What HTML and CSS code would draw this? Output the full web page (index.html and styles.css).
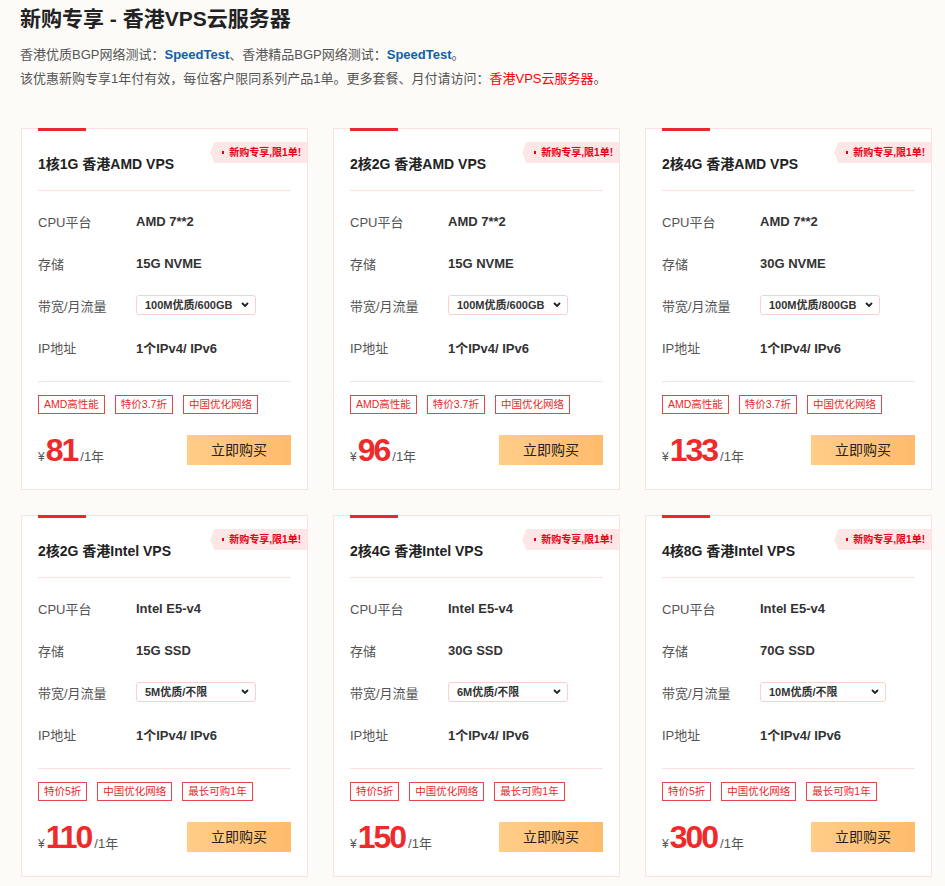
FILE: index.html
```html
<!DOCTYPE html>
<html lang="zh-CN">
<head>
  <meta charset="UTF-8">
  <meta name="viewport" content="width=device-width, initial-scale=1.0">
  <title>新购专享 - 香港VPS云服务器</title>
  <link rel="stylesheet" href="styles.css">
</head>
<body>
  <!-- Intro -->
  <section class="promo">
    <h1>新购专享 - 香港VPS云服务器</h1>
    <div class="intro">
      <p>香港优质BGP网络测试：<a class="link-blue" href="#">SpeedTest</a>、香港精品BGP网络测试：<a class="link-blue" href="#">SpeedTest</a>。</p>
      <p>该优惠新购专享1年付有效，每位客户限同系列产品1单。更多套餐、月付请访问：<a class="link-red" href="#">香港VPS云服务器</a>。</p>
    </div>

    <!-- Plans -->
    <div class="plans">

      <div class="plan">
        <span class="plan-bar"></span>
        <span class="plan-badge">新购专享,限1单!</span>
        <h3 class="plan-title">1核1G 香港AMD VPS</h3>
        <ul class="specs">
          <li><span class="spec-label">CPU平台</span><span class="spec-value">AMD 7**2</span></li>
          <li><span class="spec-label">存储</span><span class="spec-value">15G NVME</span></li>
          <li><span class="spec-label">带宽/月流量</span>
            <span class="select-wrap"><select><option>100M优质/600GB</option></select>
              <svg class="chevron" viewBox="0 0 8 5"><path d="M1 1l3 3 3-3"/></svg></span></li>
          <li><span class="spec-label">IP地址</span><span class="spec-value">1个IPv4/ IPv6</span></li>
        </ul>
        <div class="tags"><span>AMD高性能</span><span>特价3.7折</span><span>中国优化网络</span></div>
        <div class="buy-row">
          <div class="price"><span class="yen">¥</span><span class="amount">81</span><span class="unit">/1年</span></div>
          <a class="buy-btn" href="#">立即购买</a>
        </div>
      </div>

      <div class="plan">
        <span class="plan-bar"></span>
        <span class="plan-badge">新购专享,限1单!</span>
        <h3 class="plan-title">2核2G 香港AMD VPS</h3>
        <ul class="specs">
          <li><span class="spec-label">CPU平台</span><span class="spec-value">AMD 7**2</span></li>
          <li><span class="spec-label">存储</span><span class="spec-value">15G NVME</span></li>
          <li><span class="spec-label">带宽/月流量</span>
            <span class="select-wrap"><select><option>100M优质/600GB</option></select>
              <svg class="chevron" viewBox="0 0 8 5"><path d="M1 1l3 3 3-3"/></svg></span></li>
          <li><span class="spec-label">IP地址</span><span class="spec-value">1个IPv4/ IPv6</span></li>
        </ul>
        <div class="tags"><span>AMD高性能</span><span>特价3.7折</span><span>中国优化网络</span></div>
        <div class="buy-row">
          <div class="price"><span class="yen">¥</span><span class="amount">96</span><span class="unit">/1年</span></div>
          <a class="buy-btn" href="#">立即购买</a>
        </div>
      </div>

      <div class="plan">
        <span class="plan-bar"></span>
        <span class="plan-badge">新购专享,限1单!</span>
        <h3 class="plan-title">2核4G 香港AMD VPS</h3>
        <ul class="specs">
          <li><span class="spec-label">CPU平台</span><span class="spec-value">AMD 7**2</span></li>
          <li><span class="spec-label">存储</span><span class="spec-value">30G NVME</span></li>
          <li><span class="spec-label">带宽/月流量</span>
            <span class="select-wrap"><select><option>100M优质/800GB</option></select>
              <svg class="chevron" viewBox="0 0 8 5"><path d="M1 1l3 3 3-3"/></svg></span></li>
          <li><span class="spec-label">IP地址</span><span class="spec-value">1个IPv4/ IPv6</span></li>
        </ul>
        <div class="tags"><span>AMD高性能</span><span>特价3.7折</span><span>中国优化网络</span></div>
        <div class="buy-row">
          <div class="price"><span class="yen">¥</span><span class="amount">133</span><span class="unit">/1年</span></div>
          <a class="buy-btn" href="#">立即购买</a>
        </div>
      </div>

      <div class="plan">
        <span class="plan-bar"></span>
        <span class="plan-badge">新购专享,限1单!</span>
        <h3 class="plan-title">2核2G 香港Intel VPS</h3>
        <ul class="specs">
          <li><span class="spec-label">CPU平台</span><span class="spec-value">Intel E5-v4</span></li>
          <li><span class="spec-label">存储</span><span class="spec-value">15G SSD</span></li>
          <li><span class="spec-label">带宽/月流量</span>
            <span class="select-wrap"><select><option>5M优质/不限</option></select>
              <svg class="chevron" viewBox="0 0 8 5"><path d="M1 1l3 3 3-3"/></svg></span></li>
          <li><span class="spec-label">IP地址</span><span class="spec-value">1个IPv4/ IPv6</span></li>
        </ul>
        <div class="tags"><span>特价5折</span><span>中国优化网络</span><span>最长可购1年</span></div>
        <div class="buy-row">
          <div class="price"><span class="yen">¥</span><span class="amount">110</span><span class="unit">/1年</span></div>
          <a class="buy-btn" href="#">立即购买</a>
        </div>
      </div>

      <div class="plan">
        <span class="plan-bar"></span>
        <span class="plan-badge">新购专享,限1单!</span>
        <h3 class="plan-title">2核4G 香港Intel VPS</h3>
        <ul class="specs">
          <li><span class="spec-label">CPU平台</span><span class="spec-value">Intel E5-v4</span></li>
          <li><span class="spec-label">存储</span><span class="spec-value">30G SSD</span></li>
          <li><span class="spec-label">带宽/月流量</span>
            <span class="select-wrap"><select><option>6M优质/不限</option></select>
              <svg class="chevron" viewBox="0 0 8 5"><path d="M1 1l3 3 3-3"/></svg></span></li>
          <li><span class="spec-label">IP地址</span><span class="spec-value">1个IPv4/ IPv6</span></li>
        </ul>
        <div class="tags"><span>特价5折</span><span>中国优化网络</span><span>最长可购1年</span></div>
        <div class="buy-row">
          <div class="price"><span class="yen">¥</span><span class="amount">150</span><span class="unit">/1年</span></div>
          <a class="buy-btn" href="#">立即购买</a>
        </div>
      </div>

      <div class="plan">
        <span class="plan-bar"></span>
        <span class="plan-badge">新购专享,限1单!</span>
        <h3 class="plan-title">4核8G 香港Intel VPS</h3>
        <ul class="specs">
          <li><span class="spec-label">CPU平台</span><span class="spec-value">Intel E5-v4</span></li>
          <li><span class="spec-label">存储</span><span class="spec-value">70G SSD</span></li>
          <li><span class="spec-label">带宽/月流量</span>
            <span class="select-wrap select-wide"><select><option>10M优质/不限</option></select>
              <svg class="chevron" viewBox="0 0 8 5"><path d="M1 1l3 3 3-3"/></svg></span></li>
          <li><span class="spec-label">IP地址</span><span class="spec-value">1个IPv4/ IPv6</span></li>
        </ul>
        <div class="tags"><span>特价5折</span><span>中国优化网络</span><span>最长可购1年</span></div>
        <div class="buy-row">
          <div class="price"><span class="yen">¥</span><span class="amount">300</span><span class="unit">/1年</span></div>
          <a class="buy-btn" href="#">立即购买</a>
        </div>
      </div>

    </div>
  </section>
</body>
</html>
```

FILE: styles.css
```css
/* Global */
* {
  margin: 0;
  padding: 0;
  box-sizing: border-box;
}

body {
  background-color: #fcfbf8;
  color: #333;
  font-family: "Liberation Sans", "Noto Sans CJK SC", sans-serif;
  font-size: 13px;
}

a {
  text-decoration: none;
}

/* Intro */
.promo {
  padding: 4px 13px 10px 20px;
}

.promo h1 {
  font-size: 21px;
  line-height: 30px;
  font-weight: bold;
  color: #222;
}

.intro {
  margin-top: 9px;
  color: #555;
  line-height: 24px;
}

.link-blue {
  color: #0f5fae;
  font-weight: bold;
}

.link-red {
  color: #f00;
}

/* Plan grid */
.plans {
  display: grid;
  grid-template-columns: repeat(3, 1fr);
  gap: 25px;
  margin: 37px 0 0 1px;
}

.plan {
  position: relative;
  background: #fff;
  border: 1px solid #fbe1df;
  padding: 0 16px 24px;
}

.plan-bar {
  position: absolute;
  top: -1px;
  left: 16px;
  width: 48px;
  height: 3px;
  background: #e8282b;
}

.plan-badge {
  position: absolute;
  top: 13px;
  right: 0;
  height: 21px;
  line-height: 21px;
  padding: 0 6px 0 19px;
  background: #fde6e6;
  color: #e60012;
  font-size: 10px;
  font-weight: bold;
  clip-path: polygon(4px 0, 100% 0, 100% 100%, 4px 100%, 0 50%);
}

.plan-badge::before {
  content: "";
  position: absolute;
  left: 12px;
  top: 9px;
  width: 2px;
  height: 3px;
  background: #e60012;
}

.plan-title {
  padding: 24px 0 15px;
  font-size: 14px;
  line-height: 22px;
  font-weight: bold;
  color: #222;
  border-bottom: 1px solid #fbe1df;
}

/* Specs */
.specs {
  list-style: none;
  padding: 9px 0 13px;
  border-bottom: 1px solid #fbe1df;
}

.specs li {
  display: flex;
  align-items: center;
  height: 42px;
}

.spec-label {
  width: 98px;
  flex-shrink: 0;
  color: #555;
}

.spec-value {
  font-weight: bold;
  color: #333;
}

.select-wrap {
  position: relative;
  display: inline-block;
  width: 120px;
  height: 20px;
}

.select-wide {
  width: 126px;
}

.select-wrap select {
  appearance: none;
  width: 100%;
  height: 100%;
  border: 1px solid #fcd0ce;
  border-radius: 3px;
  background: #fff;
  padding: 0 0 0 8px;
  font-family: inherit;
  font-size: 11px;
  font-weight: bold;
  color: #333;
}

.chevron {
  position: absolute;
  right: 7px;
  top: 7px;
  width: 8px;
  height: 5px;
  fill: none;
  stroke: #222;
  stroke-width: 1.8;
  pointer-events: none;
}

/* Tags */
.tags {
  display: flex;
  gap: 10px;
  margin-top: 13px;
}

.tags span {
  height: 19px;
  line-height: 17px;
  padding: 0 5px;
  border: 1px solid #e84646;
  color: #e8282b;
  font-size: 10.5px;
}

/* Price + buy */
.buy-row {
  display: flex;
  justify-content: space-between;
  align-items: center;
  margin-top: 21px;
}

.price {
  display: flex;
  align-items: baseline;
  height: 30px;
  line-height: 30px;
  color: #555;
}

.yen {
  font-size: 12px;
}

.amount {
  font-size: 32px;
  font-weight: bold;
  letter-spacing: -2px;
  color: #ee2a2a;
  margin: 0 3px 0 1px;
}

.unit {
  font-size: 13px;
}

.buy-btn {
  width: 104px;
  height: 30px;
  line-height: 30px;
  text-align: center;
  background: linear-gradient(90deg, #ffcd89 0%, #ffbb6c 100%);
  color: #222;
  font-size: 14px;
}
```
